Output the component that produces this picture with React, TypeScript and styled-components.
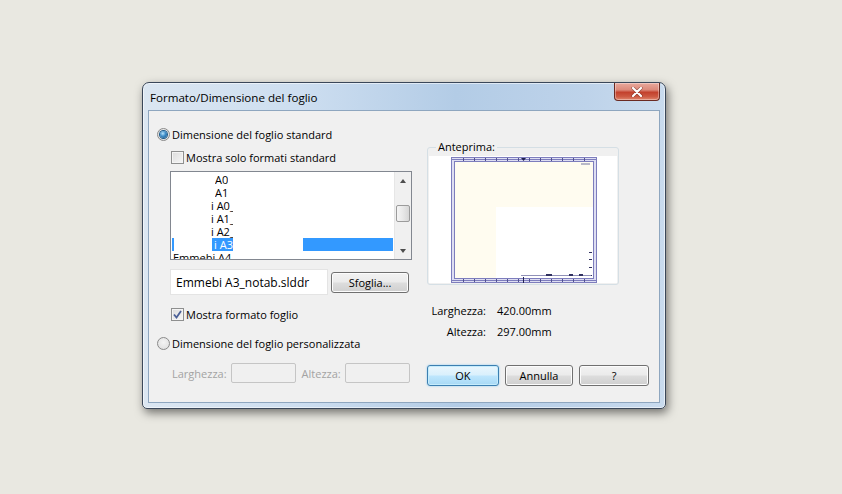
import React from "react";
import styled, { createGlobalStyle, css } from "styled-components";

const Global = createGlobalStyle`
  html, body { margin: 0; padding: 0; }
  body {
    background: #e9e8e1;
    font-family: "Open Sans", "Noto Sans", sans-serif;
    font-size: 11px;
    color: #000;
  }
  #root { width: 842px; height: 494px; overflow: hidden; }
`;

const Page = styled.div`
  width: 842px;
  height: 494px;
  padding: 82px 0 0 142px;
  box-sizing: border-box;
`;

const Window = styled.div`
  width: 524px;
  height: 327px;
  box-sizing: border-box;
  border: 1px solid #3a4759;
  border-radius: 7px 7px 5px 5px;
  background: linear-gradient(90deg, #dbe6f1 0%, #cddef0 30%, #b3cce6 60%, #bed3ea 85%, #c9dbee 100%);
  box-shadow: inset 0 0 0 1px rgba(255,255,255,0.55), 2px 4px 10px rgba(0,0,0,0.5);
  padding: 0 5px 5px 5px;
  display: flex;
  flex-direction: column;
`;

const TitleBar = styled.div`
  height: 27px;
  display: flex;
  align-items: flex-start;
  justify-content: space-between;
`;

const Title = styled.div`
  margin: 7px 0 0 2px;
  font-size: 11.6px;
  line-height: 16px;
  color: #000;
`;

const CloseBtn = styled.div`
  width: 46px;
  height: 18px;
  box-sizing: border-box;
  border: 1px solid #6a2a22;
  border-top: none;
  border-radius: 0 0 4px 4px;
  background: linear-gradient(180deg, #e9a99d 0%, #dc8a7b 40%, #c3412d 55%, #cd5a43 80%, #e0876f 100%);
  box-shadow: inset 0 0 0 1px rgba(255,255,255,0.35);
  display: flex;
  align-items: center;
  justify-content: center;
`;

const Client = styled.div`
  height: 293px;
  box-sizing: border-box;
  border: 1px solid #8ea6bf;
  background: #f0f0f0;
  padding: 15px 0 0 8px;
  display: flex;
  gap: 14px;
`;

const LeftCol = styled.div`
  width: 256px;
  display: flex;
  flex-direction: column;
`;

const RightCol = styled.div`
  display: flex;
  flex-direction: column;
  width: 222px;
`;

const OptionRow = styled.label<{ $indent?: number; $mt?: number }>`
  display: flex;
  align-items: center;
  gap: 2px;
  height: 16px;
  margin-left: ${(p) => p.$indent ?? 0}px;
  margin-top: ${(p) => p.$mt ?? 0}px;
  white-space: nowrap;
`;

const Radio = styled.span<{ $on?: boolean }>`
  width: 13px;
  height: 13px;
  box-sizing: border-box;
  border-radius: 50%;
  border: 1px solid #8a8a8a;
  background: radial-gradient(circle at 50% 40%, #f4f4f4 0%, #dcdcdc 100%);
  display: flex;
  align-items: center;
  justify-content: center;
  flex: none;
  ${(p) =>
    p.$on &&
    css`
      &::after {
        content: "";
        width: 7px;
        height: 7px;
        border-radius: 50%;
        background: radial-gradient(circle at 40% 35%, #b7e3fb 0%, #3f8dc8 45%, #164f80 100%);
        box-shadow: 0 0 0 1px #1d5a8a;
      }
    `}
`;

const Check = styled.span`
  width: 13px;
  height: 13px;
  box-sizing: border-box;
  border: 1px solid #8e8f8f;
  background: linear-gradient(135deg, #dcdcdc 0%, #f6f6f6 100%);
  box-shadow: inset 0 0 0 1px #f4f4f4;
  flex: none;
  display: flex;
  align-items: center;
  justify-content: center;
`;

const ListBox = styled.div`
  margin: 6px 0 0 13px;
  width: 242px;
  height: 89px;
  box-sizing: border-box;
  border: 1px solid #828790;
  background: #fff;
  display: flex;
  overflow: hidden;
`;

const ListItems = styled.div`
  flex: 1;
  padding-top: 1px;
  overflow: hidden;
`;

const ListRow = styled.div`
  height: 13px;
  line-height: 13px;
  display: flex;
  overflow: hidden;
`;

const ItemText = styled.span<{ $x: number; $w?: number }>`
  margin-left: ${(p) => p.$x}px;
  ${(p) => p.$w && css`width: ${p.$w}px;`}
  overflow: hidden;
  white-space: nowrap;
`;

const Caret = styled.span`
  margin-left: 1px;
  width: 2px;
  background: #3399ff;
`;

const SelSeg = styled.span<{ $x: number; $w: number }>`
  margin-left: ${(p) => p.$x}px;
  width: ${(p) => p.$w}px;
  background: #3399ff;
  color: #fff;
  overflow: hidden;
  white-space: nowrap;
  direction: rtl;
`;

const ScrollBar = styled.div`
  width: 17px;
  background: #f0f0f0;
  border-left: 1px solid #e6e6e6;
  box-sizing: border-box;
  display: flex;
  flex-direction: column;
  align-items: center;
`;

const Arrow = styled.div<{ $down?: boolean }>`
  height: 17px;
  width: 100%;
  display: flex;
  align-items: center;
  justify-content: center;
  &::after {
    content: "";
    border-left: 3.5px solid transparent;
    border-right: 3.5px solid transparent;
    ${(p) => (p.$down ? "border-top: 4px solid #4d4d4d;" : "border-bottom: 4px solid #4d4d4d;")}
  }
`;

const Track = styled.div`
  flex: 1;
  width: 100%;
  padding-top: 16px;
  box-sizing: border-box;
  display: flex;
  justify-content: center;
`;

const Thumb = styled.div`
  width: 14px;
  height: 17px;
  box-sizing: border-box;
  border: 1px solid #9b9b9b;
  border-radius: 2px;
  background: linear-gradient(90deg, #f5f5f5 0%, #e8e8e8 50%, #d6d6d6 100%);
`;

const FileRow = styled.div`
  margin: 9px 0 0 13px;
  display: flex;
  align-items: center;
  gap: 3px;
`;

const FileField = styled.div`
  width: 158px;
  height: 26px;
  box-sizing: border-box;
  border: 1px solid #e4e4e4;
  background: #fff;
  padding-left: 5px;
  display: flex;
  align-items: center;
  white-space: nowrap;
  overflow: hidden;
  font-size: 12px;
`;

const Button = styled.button<{ $w: number; $default?: boolean }>`
  width: ${(p) => p.$w}px;
  height: 21px;
  box-sizing: border-box;
  border: 1px solid #707070;
  border-radius: 3px;
  font-family: inherit;
  font-size: 11px;
  color: #000;
  padding: 0;
  background: linear-gradient(180deg, #f2f2f2 0%, #ebebeb 48%, #dddddd 52%, #cfcfcf 100%);
  box-shadow: inset 0 0 0 1px #fcfcfc;
  ${(p) =>
    p.$default &&
    css`
      border-color: #3c7fb1;
      background: linear-gradient(180deg, #eaf6fd 0%, #d9f0fc 48%, #bee6fd 52%, #a7d9f5 100%);
      box-shadow: inset 0 0 0 1px #c5ecfc, 0 0 2px #7fc4ef;
    `}
`;

const DisabledRow = styled.div`
  margin: 12px 0 0 15px;
  display: flex;
  align-items: center;
  color: #a3a3a3;
  white-space: nowrap;
`;

const DisabledLabel = styled.span<{ $ml?: number }>`
  margin-left: ${(p) => p.$ml ?? 0}px;
`;

const DisabledInput = styled.div`
  margin-left: 4px;
  width: 65px;
  height: 20px;
  box-sizing: border-box;
  border: 1px solid #c5c5c5;
  border-radius: 2px;
  background: #f0f0f0;
`;

const Group = styled.div`
  position: relative;
  margin-top: 21px;
  width: 192px;
  height: 138px;
  box-sizing: border-box;
  border: 1px solid #d5dfe5;
  border-radius: 3px;
  padding: 8px 1px 1px 1px;
`;

const Legend = styled.span`
  position: absolute;
  top: -9px;
  left: 8px;
  padding: 0 2px;
  background: #f0f0f0;
  line-height: 16px;
`;

const PreviewArea = styled.div`
  height: 127px;
  background: #fff;
  padding: 1px 0 0 22px;
  box-sizing: border-box;
`;

const DimGrid = styled.div`
  margin-top: 15px;
  display: grid;
  grid-template-columns: 59px auto;
  column-gap: 11px;
  grid-auto-rows: 21px;
  align-items: center;
`;

const DimLabel = styled.span`
  text-align: right;
`;

const ButtonRow = styled.div`
  margin-top: 23px;
  display: flex;
  gap: 6px;
`;

const items = [
  { t: "A0", x: 44 },
  { t: "A1", x: 44 },
  { t: "i A0_", x: 40, w: 22 },
  { t: "i A1_", x: 40, w: 22 },
  { t: "i A2_", x: 40, w: 22 },
];

function Paper() {
  const ticks = [12, 23, 34, 45, 56, 67, 78, 89, 100, 111, 122, 133];
  return (
    <svg width="146" height="126" viewBox="0 0 146 126">
      <rect x="0.5" y="0.5" width="145" height="125" fill="#dedef2" stroke="#7d7dbd" />
      <rect x="3.5" y="4.5" width="139" height="117" fill="#fffcf0" stroke="#7d7dbd" />
      <rect x="45" y="50" width="97" height="71" fill="#ffffff" />
      <line x1="0" y1="2.5" x2="146" y2="2.5" stroke="#7d7dbd" />
      <line x1="0" y1="123.5" x2="146" y2="123.5" stroke="#7d7dbd" />
      {ticks.map((x) => (
        <g key={x}>
          <line x1={x + 0.5} y1="1" x2={x + 0.5} y2="4" stroke="#505090" />
          <line x1={x + 0.5} y1="122" x2={x + 0.5} y2="125" stroke="#505090" />
        </g>
      ))}
      <polygon points="70,1 75,1 72.5,4" fill="#202050" />
      <line x1="72.5" y1="120" x2="72.5" y2="126" stroke="#202050" />
      <rect x="130" y="6" width="9" height="2" fill="#b8b8c8" />
      {[95, 102, 110, 118].map((y) => (
        <line key={y} x1="138" y1={y + 0.5} x2="141" y2={y + 0.5} stroke="#303060" />
      ))}
      <line x1="70" y1="118.5" x2="140" y2="118.5" stroke="#9090b8" />
      <rect x="95" y="117" width="6" height="2" fill="#303060" />
      <rect x="118" y="117" width="4" height="2" fill="#303060" />
      <rect x="128" y="117" width="4" height="2" fill="#303060" />
    </svg>
  );
}

export default function App() {
  return (
    <>
      <Global />
      <Page>
        <Window>
          <TitleBar>
            <Title>Formato/Dimensione del foglio</Title>
            <CloseBtn>
              <svg width="12" height="10" viewBox="0 0 12 10">
                <path d="M2 1 L10 9 M10 1 L2 9" stroke="#5a1a12" strokeWidth="3.4" strokeLinecap="round" opacity="0.5" />
                <path d="M2 1 L10 9 M10 1 L2 9" stroke="#ffffff" strokeWidth="2.2" strokeLinecap="round" />
              </svg>
            </CloseBtn>
          </TitleBar>
          <Client>
            <LeftCol>
              <OptionRow>
                <Radio $on />
                Dimensione del foglio standard
              </OptionRow>
              <OptionRow $indent={14} $mt={7}>
                <Check />
                Mostra solo formati standard
              </OptionRow>
              <ListBox>
                <ListItems>
                  {items.map((it, i) => (
                    <ListRow key={i}>
                      <ItemText $x={it.x} $w={it.w}>{it.t}</ItemText>
                    </ListRow>
                  ))}
                  <ListRow>
                    <Caret />
                    <SelSeg $x={38} $w={21}>i A3</SelSeg>
                    <SelSeg $x={70} $w={90} />
                  </ListRow>
                  <ListRow>
                    <ItemText $x={2} $w={60}>Emmebi A4</ItemText>
                  </ListRow>
                </ListItems>
                <ScrollBar>
                  <Arrow />
                  <Track>
                    <Thumb />
                  </Track>
                  <Arrow $down />
                </ScrollBar>
              </ListBox>
              <FileRow>
                <FileField>Emmebi A3_notab.slddr</FileField>
                <Button $w={78}>Sfoglia...</Button>
              </FileRow>
              <OptionRow $indent={14} $mt={11}>
                <Check>
                  <svg width="9" height="9" viewBox="0 0 9 9">
                    <path d="M1 4.5 L3.5 7.5 L8 1" fill="none" stroke="#4a5f97" strokeWidth="1.8" />
                  </svg>
                </Check>
                Mostra formato foglio
              </OptionRow>
              <OptionRow $mt={13}>
                <Radio />
                Dimensione del foglio personalizzata
              </OptionRow>
              <DisabledRow>
                <DisabledLabel>Larghezza:</DisabledLabel>
                <DisabledInput />
                <DisabledLabel $ml={6}>Altezza:</DisabledLabel>
                <DisabledInput />
              </DisabledRow>
            </LeftCol>
            <RightCol>
              <Group>
                <Legend>Anteprima:</Legend>
                <PreviewArea>
                  <Paper />
                </PreviewArea>
              </Group>
              <DimGrid>
                <DimLabel>Larghezza:</DimLabel>
                <span>420.00mm</span>
                <DimLabel>Altezza:</DimLabel>
                <span>297.00mm</span>
              </DimGrid>
              <ButtonRow>
                <Button $w={72} $default>OK</Button>
                <Button $w={69}>Annulla</Button>
                <Button $w={70}>?</Button>
              </ButtonRow>
            </RightCol>
          </Client>
        </Window>
      </Page>
    </>
  );
}
